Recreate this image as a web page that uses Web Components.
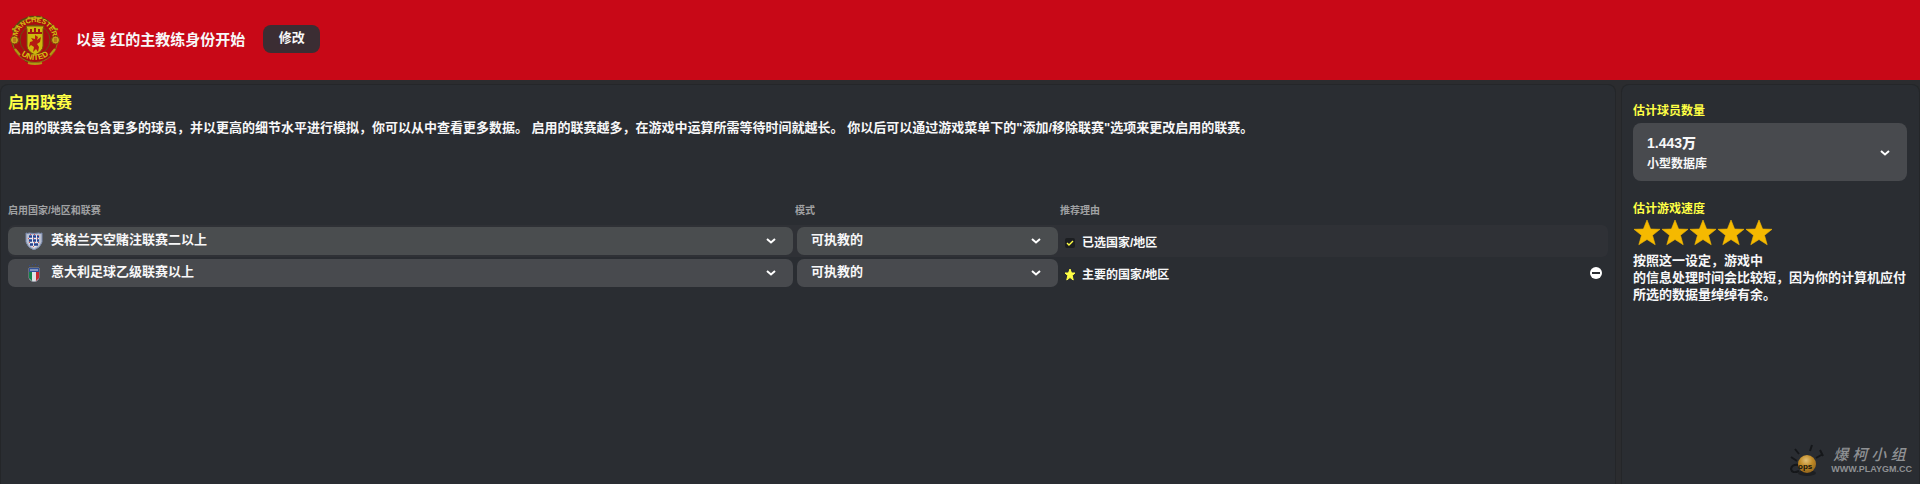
<!DOCTYPE html>
<html lang="zh-CN">
<head>
<meta charset="utf-8">
<title>启用联赛</title>
<style>
html, body { margin: 0; height: 100%; }
body { background: #2b2c2f; color: #f7f7f8; font: 700 13px/20px "Liberation Sans", "Noto Sans CJK SC", sans-serif; }
</style>
</head>
<body>
<setup-screen></setup-screen>
<script>
function define(name, html, init) {
  const template = document.createElement('template');
  template.innerHTML = html;
  customElements.define(name, class extends HTMLElement {
    constructor() {
      super();
      this.attachShadow({ mode: 'open' }).append(template.content.cloneNode(true));
    }
    connectedCallback() { if (init) init(this, this.shadowRoot); }
  });
}

define('club-crest', `
<style>:host{display:block;width:50px;height:50px} svg{display:block;font:bold 8px "Liberation Sans",sans-serif}</style>
<svg width="50" height="50" viewBox="0 0 50 50" role="img" aria-label="曼彻斯特联">
  <defs>
    <path id="top" d="M7 25a18 18 0 0 1 36 0"/>
    <path id="bottom" d="M3 23a22 22 0 0 0 44 0"/>
  </defs>
  <path d="M17 2q4-2 8-1 4-1 8 1l5 3 9 9-3 8 4 3-3 6-4 8-9 8q-8 3-16 0l-9-8-5-8-1-6 3-3-2-8 8-9z" fill="#5b4811"/>
  <circle cx="25" cy="25" r="22.500" fill="#a80d10" stroke="#8d7914"/>
  <path d="M18 2q3 3 7 0 4 3 7 0M2 14q4 1 5-4M48 14q-4 1-5-4M5 34l5 6M45 34l-5 6M18 48q7 2 14 0" fill="none" stroke="#b39812" stroke-width="2"/>
  <circle cx="25" cy="25" r="15" fill="#a80d10" stroke="#6b5010"/>
  <path d="M16 11h18l-1 3v17q0 5-8 9-8-4-8-9V14z" fill="#cdb80c" stroke="#75540e"/>
  <path d="M18 17h14v2H18zM20 14h2v3h-2zM24 13h2v4h-2zM28 14h2v3h-2z" fill="#a01812"/>
  <path d="M25 20l3 2-1 3 4-3-1 5-3 2 2 3-1 5-2-3-3 3 1-5-3-2-2 2 1-5 3-1-2-3 4 1z" fill="#b51b12"/>
  <circle cx="4.500" cy="25" r="4" fill="#c8a719" stroke="#81430f"/><circle cx="45.500" cy="25" r="4" fill="#c8a719" stroke="#81430f"/>
  <path d="M3 24h3M3 26h3M44 24h3M44 26h3" stroke="#a9471a"/>
  <g fill="#d6c012" text-anchor="middle">
    <text font-size="7"><textPath href="#top" startOffset="50%">MANCHESTER</textPath></text>
    <text><textPath href="#bottom" startOffset="50%">UNITED</textPath></text>
  </g>
</svg>`);

define('chevron-icon', `
<style>:host{display:block;width:10px;height:6px;pointer-events:none} svg{display:block}</style>
<svg width="10" height="6" viewBox="0 0 10 6"><path d="M1 1l4 3.500L9 1" fill="none" stroke="#fff" stroke-width="2"/></svg>`);

define('pill-select', `
<style>
:host{display:grid;grid-template-columns:1fr auto;align-items:center;height:28px;border-radius:7px;background:var(--pill,#484a4e)}
select{grid-area:1/1/2/3;appearance:none;width:100%;height:28px;margin:0;border:0;border-radius:7px;background:none;color:inherit;font:inherit;padding:0 40px 3px var(--inset,14px)}
option{color:#fff;background:#484a4e}
slot{display:block;grid-area:1/1;pointer-events:none}
::slotted(svg){display:block;margin-left:17px}
chevron-icon{grid-area:1/2;margin-right:17px}
</style>
<select><option></option></select><slot></slot><chevron-icon></chevron-icon>`,
(host, root) => {
  root.querySelector('option').textContent = host.getAttribute('value');
  root.querySelector('select').setAttribute('aria-label', host.getAttribute('label'));
});

define('start-banner', `
<style>
:host{display:flex;align-items:center;box-sizing:border-box;height:80px;padding:0 10px;background:#c80817}
h1{margin:0 18px 0 16px;font-size:15px;line-height:20px}
button{width:57px;height:28px;margin-bottom:2px;border:0;border-radius:8px;background:#3b2d33;color:inherit;font:inherit;padding:0 0 3px}
</style>
<club-crest></club-crest><h1>以曼 红的主教练身份开始</h1><button type="button">修改</button>`);

define('league-table', `
<style>
:host{display:block}
table{width:100%;table-layout:fixed;border-collapse:separate;border-spacing:0}
.mode{width:265px}.reason{width:523px}.action{width:25px}
th{height:24px;padding:0;text-align:left;vertical-align:top;font-size:10px;line-height:20px;color:#a0a1a3}
td{padding:0}
tbody td{height:32px;vertical-align:middle}
tbody td:nth-child(1){padding-right:2px}
tbody td:nth-child(2){padding:0 2px}
tr.odd td{background:#2f3136} tr.odd td:last-child{border-radius:0 6px 6px 0} tr.odd td:first-child{border-radius:6px 0 0 6px}
.odd{--pill:#4a4d4f}
.league{--inset:43px}
.why{display:flex;align-items:center;gap:7px;padding:3px 0 0 5px;font-size:12px}
.why svg{display:block}
button{display:block;width:12px;height:12px;border:0;padding:0;margin:0 auto;background:none}
button svg{display:block}
</style>
<table>
  <colgroup><col><col class="mode"><col class="reason"><col class="action"></colgroup>
  <thead><tr><th scope="col">启用国家/地区和联赛</th><th scope="col">模式</th><th scope="col">推荐理由</th><td></td></tr></thead>
  <tbody>
  <tr class="odd">
    <td><pill-select class="league" label="联赛" value="英格兰天空赌注联赛二以上">
      <svg width="18" height="18" viewBox="0 0 18 18">
        <path d="M1 1q2 1 3 0 5 1 10 0 1 1 3 0v9q-1 5-8 8-7-3-8-8z" fill="#b9c0d0" stroke="#7889ad"/>
        <path d="M4 3h10v8q-1 3-5 5-4-2-5-5z" fill="#e4e8f0"/>
        <path d="M4 4.500h3M8 4.500h3M12 4.500h2M4 8.500h3M8 8.500h3M12 8.500h2M5 12.500h3M9 12.500h4" stroke="#26418e" stroke-width="2.400" fill="none"/>
        <path d="M5 2h1v1H5zM9 2h1v1H9zM13 3h1v1h-1zM3 6h1v1H3zM8 6h1v1H8zM12 6h1v1h-1zM4 10h1v1H4zM9 10h1v1H9zM13 10h1v1h-1zM8 14h1v1H8z" fill="#d25359"/>
      </svg></pill-select></td>
    <td><pill-select label="模式" value="可执教的"></pill-select></td>
    <td><div class="why"><svg width="10" height="10" viewBox="0 0 10 10"><rect width="10" height="10" rx="2" fill="#1c1e21"/><path d="M2 5l2 2 4-4" fill="none" stroke="#ffff45" stroke-width="1.400"/></svg><span>已选国家/地区</span></div></td>
    <td></td>
  </tr>
  <tr>
    <td><pill-select class="league" label="联赛" value="意大利足球乙级联赛以上">
      <svg width="18" height="18" viewBox="0 0 18 18">
        <path d="M4 4h10v10q-1 3-5 4-4-1-5-4z" fill="#dfe1e5" stroke="#8b8e9c"/>
        <path d="M4 8h3v9l-3-3z" fill="#14824b"/><path d="M11 8h3v6l-3 3z" fill="#c42a31"/>
        <path d="M4 4h10v4H4z" fill="#31519a"/><path d="M5 6h8" stroke="#d4d9e6"/>
        <path d="M4 1h1v1H4zM7 0h1v1H7zM10 0h1v1h-1zM13 1h1v1h-1z" fill="#364b8b"/>
      </svg></pill-select></td>
    <td><pill-select label="模式" value="可执教的"></pill-select></td>
    <td><div class="why"><svg width="10" height="12" viewBox="0 0 10 12"><path d="M5 0l1.500 4H10L7.200 6.500 8.200 11 5 8.500 1.800 11l1-4.500L0 4h3.500z" fill="#ffff45" stroke="#ffff45" stroke-width="1"/></svg><span>主要的国家/地区</span></div></td>
    <td><button type="button" aria-label="移除联赛"><svg width="12" height="12" viewBox="0 0 12 12"><circle cx="6" cy="6" r="6" fill="#fff"/><path d="M2 6h8" stroke="#2a2d32" stroke-width="2"/></svg></button></td>
  </tr>
  </tbody>
</table>`);

define('star-rating', `
<style>:host{display:flex;gap:2px;height:26px} svg{display:block}</style>`,
(host, root) => {
  const star = '<svg width="26" height="26" viewBox="0 0 26 26"><path d="M13 0l3.600 9 9.400.3-7.500 6 2.700 9.400-8.200-5.200-8.200 5.200 2.700-9.400-7.500-6 9.400-.3z" fill="#f5b900" stroke="#f5b900" stroke-width=".6"/></svg>';
  root.innerHTML += star.repeat(Number(host.getAttribute('value')));
});

define('database-size', `
<style>
:host{display:block}
button{display:flex;align-items:center;justify-content:space-between;box-sizing:border-box;width:100%;height:58px;border:0;border-radius:8px;background:#484a4e;color:inherit;padding:2px 17px 0 14px;text-align:left;font:inherit;font-size:12px}
strong{display:block;font-size:14px;line-height:22px}
</style>
<button type="button" aria-haspopup="listbox"><span><strong>1.443万</strong>小型数据库</span></button>`,
(host, root) => root.querySelector('button').append(document.createElement('chevron-icon')));

define('site-mark', `
<style>
:host{display:flex;align-items:center;gap:2px;color:#8f9194}
svg{display:block}
.words{display:flex;flex-direction:column}
.name{font:italic 500 15px/18px "Noto Sans CJK SC",sans-serif;padding-left:2px;display:flex;gap:4px}
.url{font:700 9px/12px "Liberation Sans",sans-serif}
</style>
<svg width="40" height="36" viewBox="0 0 40 36">
  <defs><radialGradient id="g" cx=".45" cy=".3" r=".7"><stop stop-color="#e3c177"/><stop offset=".5" stop-color="#c08a26"/><stop offset="1" stop-color="#94651c"/></radialGradient></defs>
  <path d="M6 7l4 5M2 15l6 4M23 3l-2 6M27 16l7-4M31 8l3 6M10 23q-7-1-8 4 1 5 8 2" fill="none" stroke="#15171a" stroke-width="2"/>
  <ellipse cx="18" cy="31" rx="9" ry="3" fill="#1d1f22"/>
  <circle cx="18" cy="22" r="9" fill="url(#g)"/>
  <text x="9" y="27" font-family="Liberation Sans" font-weight="700" font-size="8" fill="#15130e">ops</text>
</svg>
<div class="words"><span class="name"><span>爆</span><span>柯</span><span>小</span><span>组</span></span><span class="url">WWW.PLAYGM.CC</span></div>`);

define('setup-screen', `
<style>
:host{display:flex;flex-direction:column;min-height:100%}
.body{flex:1;display:grid;grid-template-columns:1fr 299px;gap:5px;padding:4px 0 0}
main,aside{box-sizing:border-box;border:1px solid #242629;border-bottom:0;border-radius:8px 8px 0 0;background:#2a2d32}
main{padding:6px 7px 0}
h2{margin:0;font-size:16px;line-height:24px;color:#ffff45}
p{margin:0}
main p{line-height:26px}
league-table{margin-top:60px}
aside{display:flex;flex-direction:column;padding:16px 12px 6px 11px}
h3{margin:0;font-size:12px;line-height:20px;color:#ffff45}
database-size{margin:2px 0 18px}
star-rating{margin:1px 0 6px 1px}
aside p{line-height:17px}
site-mark{margin:auto -5px 0 auto}
</style>
<start-banner></start-banner>
<div class="body">
  <main>
    <h2>启用联赛</h2>
    <p>启用的联赛会包含更多的球员，并以更高的细节水平进行模拟，你可以从中查看更多数据。 启用的联赛越多，在游戏中运算所需等待时间就越长。 你以后可以通过游戏菜单下的"添加/移除联赛"选项来更改启用的联赛。</p>
    <league-table></league-table>
  </main>
  <aside>
    <h3>估计球员数量</h3>
    <database-size></database-size>
    <h3>估计游戏速度</h3>
    <star-rating value="5" role="img" aria-label="5 / 5"></star-rating>
    <p>按照这一设定，游戏中<br>的信息处理时间会比较短，因为你的计算机应付所选的数据量绰绰有余。</p>
    <site-mark></site-mark>
  </aside>
</div>`);
</script>
</body>
</html>
